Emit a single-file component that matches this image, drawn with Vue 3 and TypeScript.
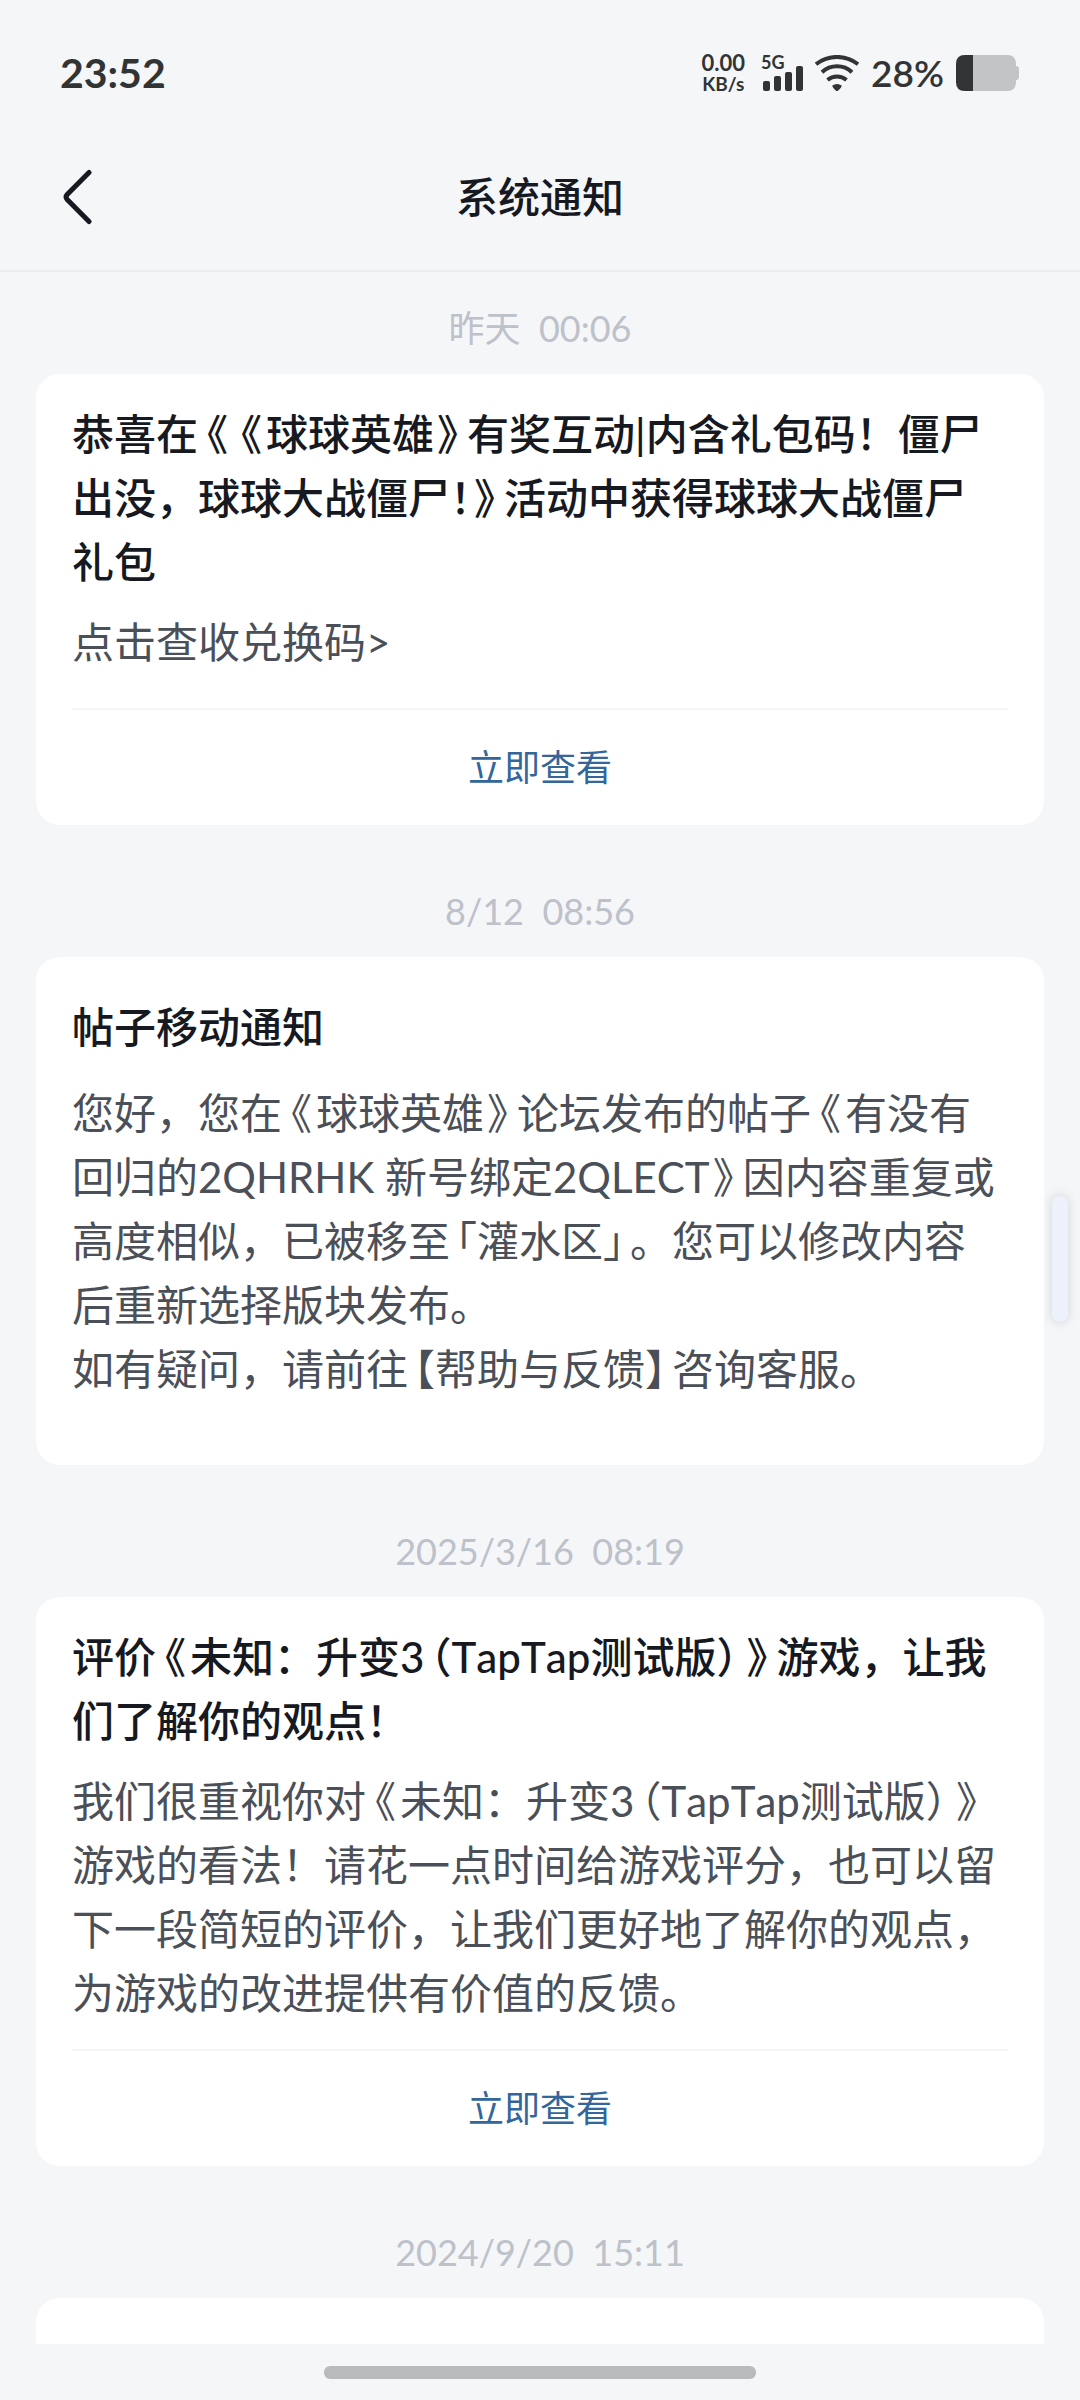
<script setup lang="ts">
interface Notice {
  id: number
  date: string
  title: string[]
  body: string[]
  action?: string
}

interface Piece {
  text: string
  kind: string
}

const notices: Notice[] = [
  {
    id: 1,
    date: '昨天  00:06',
    title: [
      '恭喜在《《球球英雄》有奖互动|内含礼包码！僵尸',
      '出没，球球大战僵尸！》活动中获得球球大战僵尸',
      '礼包',
    ],
    body: ['点击查收兑换码>'],
    action: '立即查看',
  },
  {
    id: 2,
    date: '8/12  08:56',
    title: ['帖子移动通知'],
    body: [
      '您好，您在《球球英雄》论坛发布的帖子《有没有',
      '回归的2QHRHK 新号绑定2QLECT》因内容重复或',
      '高度相似，已被移至「灌水区」。您可以修改内容',
      '后重新选择版块发布。',
      '如有疑问，请前往【帮助与反馈】咨询客服。',
    ],
  },
  {
    id: 3,
    date: '2025/3/16  08:19',
    title: ['评价《未知：升变3（TapTap测试版）》游戏，让我', '们了解你的观点！'],
    body: [
      '我们很重视你对《未知：升变3（TapTap测试版）》',
      '游戏的看法！请花一点时间给游戏评分，也可以留',
      '下一段简短的评价，让我们更好地了解你的观点，',
      '为游戏的改进提供有价值的反馈。',
    ],
    action: '立即查看',
  },
  { id: 4, date: '2024/9/20  15:11', title: [], body: [] },
]

// Brackets are set on half-width cells with a little side space.
function pieces(text: string): Piece[] {
  return text
    .split(/([《》「」【】（）]|！(?=》))/)
    .filter((t) => t !== '')
    .map((t) => ({ text: t, kind: kindOf(t) }))
}

function kindOf(t: string): string {
  if (t === '《') return 'half book-open'
  if (t === '》') return 'half book-close'
  if (t === '「' || t === '【' || t === '（') return 'half open'
  if (t === '」' || t === '】' || t === '）') return 'half close'
  if (t === '！') return 'half'
  return ''
}
</script>

<template>
  <div class="screen">
    <div class="status">
      <span class="clock">23:52</span>
      <div class="indicators">
        <div class="speed">
          <span class="rate">0.00</span>
          <span class="unit">KB/s</span>
        </div>
        <div class="cell">
          <span class="net">5G</span>
          <svg class="bars" width="42" height="36" viewBox="0 0 42 36" aria-hidden="true">
            <rect x="2" y="26" width="7" height="10" rx="2" />
            <rect x="13" y="21" width="7" height="15" rx="2" />
            <rect x="24" y="17" width="7" height="19" rx="2" />
            <rect x="35" y="11" width="7" height="25" rx="2" />
          </svg>
        </div>
        <svg class="wifi" width="44" height="36" viewBox="0 0 44 36" aria-hidden="true">
          <g fill="none" stroke="#323335" stroke-width="4">
            <path d="M1 9.2A34 34 0 0 1 43 9.2" />
            <path d="M7 17.2A22 22 0 0 1 37 17.2" />
            <path d="M12.500 25A15 15 0 0 1 31.500 25" />
          </g>
          <path d="M17.300 30.600Q22 27.300 26.700 30.600Q27 32 23.200 35.500Q22 36.500 20.800 35.500Q17 32 17.300 30.600Z" fill="#323335" />
        </svg>
        <span class="percent">28%</span>
        <svg class="battery" width="64" height="36" viewBox="0 0 64 36" aria-hidden="true">
          <path d="M9 0H52Q59 0 60 8V11Q63 11 63 14V22Q63 25 60 25V28Q59 36 52 36H9Q0 36 0 27V9Q0 0 9 0Z" fill="#c3c4c6" />
          <path d="M17 0H9Q0 0 0 9V27Q0 36 9 36H17Z" fill="#323335" />
        </svg>
      </div>
    </div>

    <header class="header">
      <button class="back" type="button" aria-label="返回">
        <svg width="32" height="56" viewBox="0 0 32 56" aria-hidden="true">
          <path d="M27 3.500L5.200 25.500Q3 28 5.200 30.500L27 52.500" fill="none" stroke="#16191f" stroke-width="5" stroke-linecap="round" />
        </svg>
      </button>
      <h1>系统通知</h1>
    </header>

    <main class="list">
      <section v-for="n in notices" :key="n.id" class="entry">
        <time class="date">{{ n.date }}</time>
        <article class="card" :class="{ plain: !n.action }">
          <h2 v-if="n.title.length" class="title">
            <span v-for="line in n.title" :key="line" class="line"><span v-for="(p, i) in pieces(line)" :key="i" :class="p.kind">{{ p.text }}</span></span>
          </h2>
          <p v-if="n.body.length" class="body">
            <span v-for="line in n.body" :key="line" class="line"><span v-for="(p, i) in pieces(line)" :key="i" :class="p.kind">{{ p.text }}</span></span>
          </p>
          <a v-if="n.action" class="action" href="#">{{ n.action }}</a>
        </article>
      </section>
    </main>

    <div class="nav"><span class="pill"></span></div>
    <div class="edge-handle"></div>
  </div>
</template>

<style>
body {
  margin: 0;
  background: #f4f6f8;
}
</style>

<style scoped>
.screen {
  position: relative;
  display: flex;
  flex-direction: column;
  height: 100vh;
  overflow: hidden;
  background: #f4f6f8;
  color: #16191f;
  font-family: Lato, "Noto Sans CJK SC", sans-serif;
}
.status {
  flex: none;
  display: flex;
  justify-content: space-between;
  align-items: center;
  height: 98px;
  padding: 24px 60px 0;
  color: #323335;
  font-weight: 700;
}
.clock {
  font-size: 41px;
  line-height: 48px;
}
.indicators {
  display: flex;
  align-items: center;
}
.speed {
  display: flex;
  flex-direction: column;
  align-items: center;
  margin-right: 16px;
}
.rate {
  font-size: 22px;
  line-height: 22px;
}
.unit {
  font-size: 19px;
  line-height: 20px;
}
.cell {
  position: relative;
  display: flex;
  margin-right: 12px;
}
.net {
  position: absolute;
  top: 0;
  left: 0;
  font-size: 18px;
  line-height: 14px;
}
.bars {
  fill: #323335;
}
.wifi {
  margin-right: 12px;
}
.percent {
  margin-right: 12px;
  font-size: 37px;
  line-height: 48px;
  font-weight: 600;
}
.header {
  flex: none;
  position: relative;
  display: flex;
  align-items: center;
  justify-content: center;
  height: 146px;
  padding-top: 2px;
  border-bottom: 2px solid #ebecee;
}
.back {
  position: absolute;
  left: 62px;
  display: flex;
  padding: 0;
  border: 0;
  background: none;
}
h1 {
  margin: 0;
  font-size: 42px;
  line-height: 64px;
  font-weight: 500;
}
.list {
  flex: 1;
  min-height: 0;
  overflow: hidden;
  padding: 0 36px;
}
.entry {
  display: flex;
  flex-direction: column;
  padding-top: 62px;
}
.entry:first-child {
  padding-top: 32px;
}
.date {
  margin-bottom: 22px;
  color: #bcc1ca;
  font-size: 36px;
  line-height: 48px;
  text-align: center;
  white-space: pre;
}
.card {
  display: flex;
  flex-direction: column;
  gap: 16px;
  padding: 28px 36px 0;
  border-radius: 24px;
  background: #fff;
}
.card.plain {
  gap: 22px;
  padding: 38px 36px 64px;
}
.title,
.body {
  margin: 0;
  font-size: 42px;
  line-height: 64px;
  font-kerning: none;
  text-spacing-trim: space-all;
}
.title {
  font-weight: 500;
}
.body {
  color: #4a4f58;
}
.line {
  display: block;
}
.half {
  font-feature-settings: "halt";
}
.book-open {
  margin: 0 4px 0 9px;
}
.book-close {
  margin: 0 9px 0 3px;
}
.open {
  margin-left: 6px;
}
.close {
  margin-right: 6px;
}
.card:not(.plain) .body {
  min-height: 74px;
}
.action {
  margin-top: 8px;
  border-top: 2px solid #f4f5f7;
  color: #33669b;
  font-size: 36px;
  line-height: 115px;
  text-align: center;
  text-decoration: none;
}
.nav {
  flex: none;
  display: flex;
  justify-content: center;
  align-items: center;
  height: 56px;
}
.pill {
  width: 40%;
  height: 13px;
  border-radius: 6px;
  background: #b9babc;
}
.edge-handle {
  position: absolute;
  top: 1196px;
  right: 12px;
  width: 16px;
  height: 126px;
  border-radius: 8px;
  background: #edf1fb;
  box-shadow: 0 0 8px 2px rgba(60, 60, 60, 0.12);
}
</style>
